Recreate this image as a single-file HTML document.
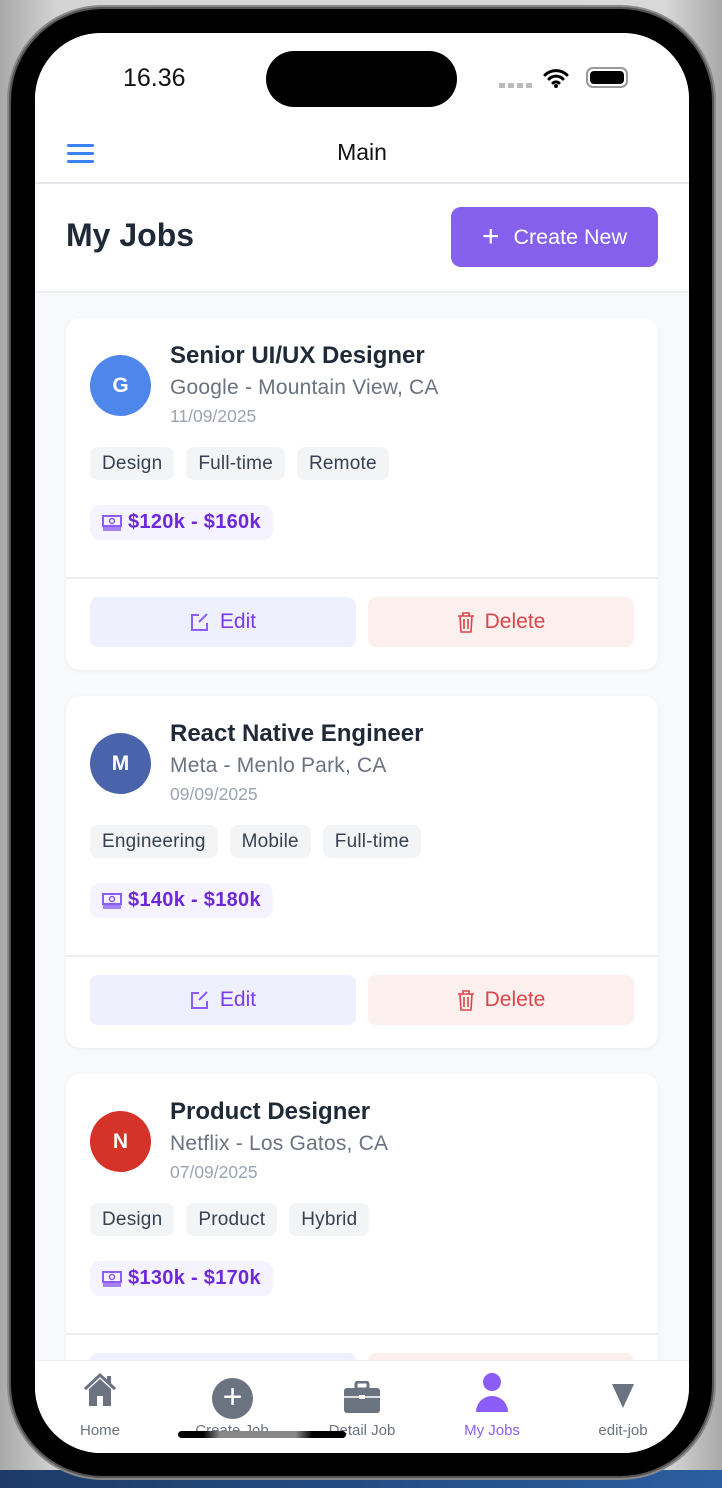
<!DOCTYPE html>
<html><head><meta charset="utf-8"><style>
*{margin:0;padding:0;box-sizing:border-box}
body{width:722px;height:1488px;overflow:hidden;position:relative;font-family:"Liberation Sans",sans-serif;background:linear-gradient(90deg,#a9a9a9,#d4d4d4 8%,#d8d8d8 92%,#a9a9a9)}
.blue{position:absolute;left:0;top:1470px;width:722px;height:18px;background:linear-gradient(90deg,#1d3b66,#2b5ea0)}
.frame{position:absolute;left:11px;top:9px;width:701px;height:1467px;border-radius:92px;background:#000;box-shadow:0 0 0 2px #555,0 0 0 4px #888}
.screen{position:absolute;left:35px;top:33px;width:654px;height:1420px;border-radius:66px;background:#f8f9fb;overflow:hidden}
.abs{position:absolute}
.top{left:0;top:0;width:654px;height:259px;background:#fff}
.card{position:absolute;left:31px;width:592px;height:352px;background:#fff;border-radius:14px;box-shadow:0 1px 4px rgba(0,0,0,.06)}
.av{position:absolute;left:24px;top:37px;width:61px;height:61px;border-radius:50%;color:#fff;font-weight:bold;font-size:21px;text-align:center;line-height:61px}
.t{position:absolute;left:104px;top:24px;font-size:24px;font-weight:bold;color:#1f2937}
.s{position:absolute;left:104px;top:58px;font-size:21px;color:#6b7280;letter-spacing:.2px}
.d{position:absolute;left:104px;top:88px;font-size:17.5px;color:#9ca3af}
.tags{position:absolute;left:24px;top:129px;display:flex;gap:12px}
.tag{height:33px;padding:0 12px;background:#f3f4f6;border-radius:8px;font-size:19px;color:#374151;line-height:33px;letter-spacing:.2px}
.sal{position:absolute;left:24px;top:187px;height:35px;padding:0 12px;background:#f5f3ff;border-radius:10px;color:#6d28d9;font-weight:bold;font-size:20px;line-height:35px;display:flex;align-items:center;gap:6px;letter-spacing:.3px}
.hr{position:absolute;left:0;top:259px;width:592px;height:2px;background:#eceef1}
.btn{position:absolute;top:279px;height:50px;width:266px;border-radius:8px;font-size:21px;display:flex;align-items:center;justify-content:center;gap:10px}
.e{left:24px;background:#eef0fd;color:#7c3aed}
.x{left:302px;background:#fcf0ef;color:#dc4545}
.tab{position:absolute;top:1327px;width:654px;height:100px;background:#fff;border-top:1px solid #eee}
.ti{position:absolute;top:1389px;font-size:15px;color:#6b7280;transform:translateX(-50%)}
</style></head><body>
<div class="blue"></div>
<div class="frame"></div>
<div class="screen">
 <div class="abs top"></div>
 <div class="abs" style="left:88px;top:31px;font-size:25px;font-weight:500;color:#111">16.36</div>
 <div class="abs" style="left:231px;top:18px;width:191px;height:56px;border-radius:28px;background:#000"></div>
 <div class="abs" style="left:464px;top:50px;width:35px;height:5px;background:repeating-linear-gradient(90deg,#bbb 0 6px,transparent 6px 9px)"></div>
 <svg class="abs" style="left:508px;top:34px" width="26" height="22" viewBox="0 0 26 22"><path d="M2 8a16 16 0 0 1 22 0M6 12a10 10 0 0 1 14 0M10 16a4.5 4.5 0 0 1 6 0" stroke="#000" stroke-width="3" fill="none" stroke-linecap="round"/><circle cx="13" cy="19" r="2" fill="#000"/></svg>
 <div class="abs" style="left:551px;top:34px;width:42px;height:21px;border:2px solid #999;border-radius:7px;padding:2px"><div style="width:100%;height:100%;background:#000;border-radius:4px"></div></div>
 <div class="abs" style="left:32px;top:111px;width:27px;height:3px;background:#3b82f6;border-radius:2px;box-shadow:0 8px 0 #3b82f6,0 16px 0 #3b82f6"></div>
 <div class="abs" style="left:0;width:654px;text-align:center;top:106px;font-size:23px;color:#111">Main</div>
 <div class="abs" style="left:0;top:149px;width:654px;height:2px;background:#e5e7eb"></div>
 <div class="abs" style="left:31px;top:184px;font-size:32px;font-weight:bold;color:#1f2937">My Jobs</div>
 <div class="abs" style="left:416px;top:174px;width:207px;height:60px;border-radius:10px;background:#8560ec;color:#fff;font-size:21.5px;display:flex;align-items:center;justify-content:center;gap:14px"><span style="font-size:30px;font-weight:300">+</span>Create New</div>
 <div class="abs" style="left:0;top:258px;width:654px;height:2px;background:#eceef1"></div>

 <div class="card" style="top:285px">
  <div class="av" style="background:#4f86ec">G</div>
  <div class="t">Senior UI/UX Designer</div><div class="s">Google - Mountain View, CA</div><div class="d">11/09/2025</div>
  <div class="tags"><div class="tag">Design</div><div class="tag">Full-time</div><div class="tag">Remote</div></div>
  <div class="sal"><svg width="20" height="16"><rect x="1" y="1" width="18" height="10" fill="none" stroke="#8b5cf6" stroke-width="2"/><circle cx="10" cy="6" r="2.5" fill="none" stroke="#8b5cf6" stroke-width="1.5"/><path d="M1 13h18M1 15h18" stroke="#8b5cf6" stroke-width="1.5"/></svg>$120k - $160k</div>
  <div class="hr"></div>
  <div class="btn e"><svg width="20" height="20"><path d="M9 3H2v15h15v-7M17 2l-8 8" stroke="#8b5cf6" stroke-width="2" fill="none"/></svg>Edit</div>
  <div class="btn x"><svg width="18" height="22"><path d="M1 5h16M6 5V2h6v3M3 5l1 16h10l1-16M7 8v10M11 8v10" stroke="#dc4545" stroke-width="1.6" fill="none"/></svg>Delete</div>
 </div>
 <div class="card" style="top:663px">
  <div class="av" style="background:#4a64ab">M</div>
  <div class="t">React Native Engineer</div><div class="s">Meta - Menlo Park, CA</div><div class="d">09/09/2025</div>
  <div class="tags"><div class="tag">Engineering</div><div class="tag">Mobile</div><div class="tag">Full-time</div></div>
  <div class="sal"><svg width="20" height="16"><rect x="1" y="1" width="18" height="10" fill="none" stroke="#8b5cf6" stroke-width="2"/><circle cx="10" cy="6" r="2.5" fill="none" stroke="#8b5cf6" stroke-width="1.5"/><path d="M1 13h18M1 15h18" stroke="#8b5cf6" stroke-width="1.5"/></svg>$140k - $180k</div>
  <div class="hr"></div>
  <div class="btn e"><svg width="20" height="20"><path d="M9 3H2v15h15v-7M17 2l-8 8" stroke="#8b5cf6" stroke-width="2" fill="none"/></svg>Edit</div>
  <div class="btn x"><svg width="18" height="22"><path d="M1 5h16M6 5V2h6v3M3 5l1 16h10l1-16M7 8v10M11 8v10" stroke="#dc4545" stroke-width="1.6" fill="none"/></svg>Delete</div>
 </div>
 <div class="card" style="top:1041px">
  <div class="av" style="background:#d5322a">N</div>
  <div class="t">Product Designer</div><div class="s">Netflix - Los Gatos, CA</div><div class="d">07/09/2025</div>
  <div class="tags"><div class="tag">Design</div><div class="tag">Product</div><div class="tag">Hybrid</div></div>
  <div class="sal"><svg width="20" height="16"><rect x="1" y="1" width="18" height="10" fill="none" stroke="#8b5cf6" stroke-width="2"/><circle cx="10" cy="6" r="2.5" fill="none" stroke="#8b5cf6" stroke-width="1.5"/><path d="M1 13h18M1 15h18" stroke="#8b5cf6" stroke-width="1.5"/></svg>$130k - $170k</div>
  <div class="hr"></div>
  <div class="btn e"></div><div class="btn x"></div>
 </div>

 <div class="tab"></div>
 <svg class="abs" style="left:47px;top:1339px" width="36" height="36" viewBox="0 0 36 36"><path d="M3 17L18 3l15 14" stroke="#6b7280" stroke-width="3" fill="none"/><path d="M7 17L18 7l11 10v17H21V24h-6v10H7z" fill="#6b7280"/><rect x="25" y="4" width="4" height="8" fill="#6b7280"/></svg>
 <div class="abs" style="left:177px;top:1345px;width:41px;height:41px;border-radius:50%;background:#6b7280;color:#fff;font-size:34px;line-height:38px;text-align:center">+</div>
 <svg class="abs" style="left:309px;top:1348px" width="36" height="32" viewBox="0 0 36 32"><rect x="12" y="1" width="12" height="7" rx="2" fill="none" stroke="#6b7280" stroke-width="3"/><rect x="0" y="7" width="36" height="25" rx="3" fill="#6b7280"/><path d="M0 16h36" stroke="#fff" stroke-width="1.5"/><rect x="15" y="14" width="6" height="4" fill="#fff"/></svg>
 <svg class="abs" style="left:440px;top:1339px" width="34" height="40" viewBox="0 0 34 40"><circle cx="17" cy="10" r="9" fill="#8b5cf6"/><path d="M1 40a16 16 0 0 1 32 0z" fill="#8b5cf6"/></svg>
 <svg class="abs" style="left:577px;top:1351px" width="22" height="24"><path d="M0 0h22L11 24z" fill="#6b7280"/></svg>
 <div class="ti" style="left:65px">Home</div>
 <div class="ti" style="left:197px">Create Job</div>
 <div class="ti" style="left:327px">Detail Job</div>
 <div class="ti" style="left:457px;color:#8b5cf6">My Jobs</div>
 <div class="ti" style="left:588px">edit-job</div>
 <div class="abs" style="left:143px;top:1398px;width:168px;height:7px;border-radius:4px;background:linear-gradient(90deg,#000 15%,#888 25%,#888 70%,#000 80%)"></div>
</div>
</body></html>
